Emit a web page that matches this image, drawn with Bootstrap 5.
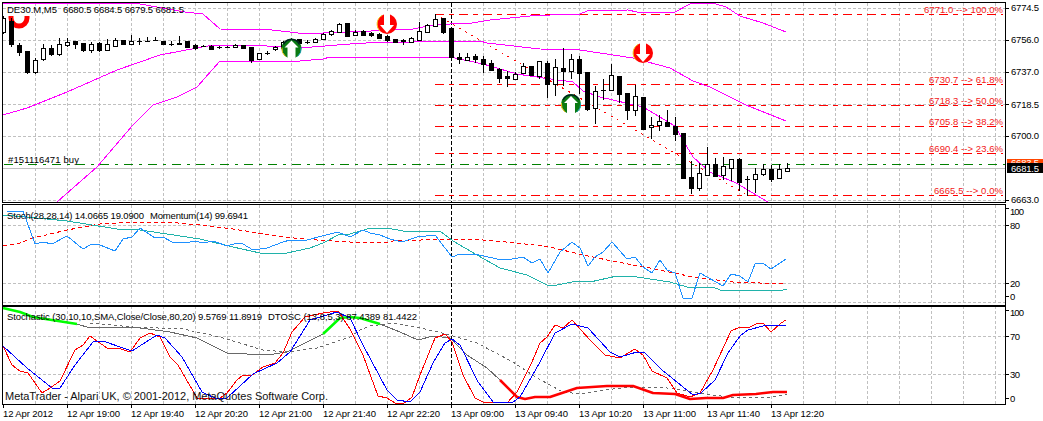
<!DOCTYPE html>
<html lang="en">
<head>
<meta charset="utf-8">
<title>DE30.M,M5</title>
<link href="https://cdn.jsdelivr.net/npm/bootstrap@5.3.0/dist/css/bootstrap.min.css" rel="stylesheet">
<style>
html,body{margin:0;padding:0;background:#fff;overflow:hidden}
.chart-wrap{width:1043px;height:421px}
.pane-svg{display:block;width:1043px;flex:none}
.pane-main{height:204px}.pane-mid{height:100px}.pane-low{height:117px}
.pane-svg text{font-family:"Liberation Sans",Arial,sans-serif;font-size:9.5px;fill:#000}
.pane-svg text.fib{fill:#f21a1a}
.pane-svg text.brand{font-size:11px;fill:#111}
.pane-svg text.px{fill:#fff}
.pane-svg text.px-o{fill:#fff}
.ln{fill:none;stroke-width:1;shape-rendering:crispEdges}
.gridl{stroke:#c0c0c0;stroke-dasharray:3 2}
.cross{stroke:#000;stroke-dasharray:4 2}
.frame{stroke:#000;fill:none;shape-rendering:crispEdges}
.fibl{stroke:#f00;stroke-dasharray:9 5 5 5}
.ordl{stroke:#008000;stroke-dasharray:9 6 3 6}
.bidl{stroke:#c0c0c0}
.diag{stroke:#f00;stroke-dasharray:2 5}
.band{stroke:#f0f}
.mom{stroke:#1e90ff}
.teal{stroke:#20b2aa}
.rdot{stroke:#f00;stroke-dasharray:4 3}
.st-r{stroke:#f00}
.st-b{stroke:#00f}
.gray{stroke:#696969}
.gray-d{stroke:#696969;stroke-dasharray:3 3}
.thick{fill:none;stroke-width:2.5;stroke-linejoin:round}
.th-g{stroke:#0f0}
.th-r{stroke:#f00}
.cdl{stroke:#000;shape-rendering:crispEdges}
.cdl-up{fill:#fff}.cdl-dn{fill:#000}
.ico-r{fill:#f00}.ico-g{fill:#0a7a12}
.ico-w{fill:#fff}
.ico-y{fill:none;stroke:#f5c518;stroke-width:1}
.ico-c{fill:none;stroke:#15a0b0;stroke-width:1}
.ico-k{fill:none;stroke:#022;stroke-width:1.5}
.u-red{fill:none;stroke:#f00;stroke-width:5}
.tag-o{fill:#ff4500}.tag-k{fill:#000}
</style>
</head>
<body>
<div class="chart-wrap d-flex flex-column">

<svg class="pane-svg pane-main" viewBox="0 0 1043 204" xmlns="http://www.w3.org/2000/svg">
  <defs><clipPath id="clipMain"><rect x="3" y="3" width="1002" height="199"/></clipPath></defs>
  <g id="gridA"></g>
  <g clip-path="url(#clipMain)">
    <path class="ln bidl" d="M3 168.5H1005"/>
    <path class="ln ordl" d="M4 164.5H1005"/>
    <path class="ln fibl" d="M435 14.5H1003M435 84.5H1003M435 105.5H1003M435 126.5H1003M435 153.5H1003M435 195.5H1003"/>
    <path class="ln st-r" d="M435.5 14V18"/>
    <path class="ln diag" d="M435 14L747 195"/>
    <polyline class="ln band" points="3,3 135,3 140,4 185,12 203,14 220,29 272,30 307,34 323,33 350,32 413,29 433,25 450,24 472,23 490,20 530,16 550,15 580,14 587,11 628,10 637,12 675,12 690,4 700,3 716,4 726,7 740,16 763,23 786,32"/>
    <polyline class="ln band" points="3,115 27,108 67,92 117,70 160,55 213,45 250,45 300,48 350,44 383,42 413,42 433,41 480,41 487,43 540,49 580,50 633,58 670,68 693,81 710,87 746,105 786,121"/>
    <polyline class="ln band" points="57,202 97,167 133,125 153,105 177,97 197,87 220,61 300,61 323,59 330,57 383,57 450,57 483,64 517,74 543,78 573,82 583,91 600,97 643,107 675,126 687,147 693,157 710,172 736,183 768,202"/>
    <path class="u-red" d="M11 16V18A8 8 0 0 0 27 18V16"/>
    <g id="candles"></g>
    <g id="icons"></g>
  </g>
  <g id="axisA"></g>
  <rect class="frame" x="2.5" y="2.5" width="1003" height="200"/>
  <text x="7" y="13" textLength="50">DE30.M,M5</text>
  <text x="63" y="13" textLength="121">6680.5 6684.5 6679.5 6681.5</text>
  <text x="8" y="163" textLength="71">#151116471 buy</text>
  <text class="fib" x="924" y="12.5" textLength="79">6771.0 --&gt; 100.0%</text>
  <text class="fib" x="929" y="82.5" textLength="74">6730.7 --&gt; 61.8%</text>
  <text class="fib" x="929" y="103.5" textLength="74">6718.3 --&gt; 50.0%</text>
  <text class="fib" x="929" y="124.5" textLength="74">6705.8 --&gt; 38.2%</text>
  <text class="fib" x="929" y="151.5" textLength="74">6690.4 --&gt; 23.6%</text>
  <text class="fib" x="934" y="193.5" textLength="69">6665.5 --&gt; 0.0%</text>
  <text x="1011" y="11" textLength="28">6774.5</text>
  <text x="1011" y="43" textLength="28">6756.0</text>
  <text x="1011" y="75" textLength="28">6737.0</text>
  <text x="1011" y="107.5" textLength="28">6718.5</text>
  <text x="1011" y="139" textLength="28">6700.0</text>
  <text x="1011" y="203" textLength="28">6663.0</text>
  <rect class="tag-o" x="1007" y="159" width="36" height="6"/>
  <text class="px-o" x="1011" y="166" textLength="28">6683.5</text>
  <rect class="tag-k" x="1007" y="163" width="36" height="10"/>
  <text class="px" x="1011" y="172" textLength="28">6681.5</text>
</svg>

<svg class="pane-svg pane-mid" viewBox="0 204 1043 100" xmlns="http://www.w3.org/2000/svg">
  <g id="gridB"></g>
  <polyline class="ln rdot" points="3,246 20,243 33,238 67,230 100,224 133,222 167,222 200,225 233,229 283,237 317,240 350,242 383,243 393,241 450,239 483,240 517,243 550,247 583,255 617,262 650,268 693,277 733,282 786,284"/>
  <polyline class="ln teal" points="3,215 27,217 67,221 117,229 140,230 167,234 200,239 233,247 260,253 287,253 310,248 323,243 340,234 350,234 367,229 387,228 403,231 422,231 440,231 453,241 477,255 500,268 527,275 547,285 557,285 577,281 590,282 617,276 637,277 650,279 670,282 687,287 713,287 720,290 743,290 748,291 783,290 787,289"/>
  <polyline class="ln mom" points="7,211 23,211 35,244 43,242 52,244 67,236 83,249 92,244 100,245 115,251 123,239 132,237 140,228 155,238 163,237 172,242 185,243 195,241 203,243 213,241 227,246 237,243 243,244 253,250 267,248 283,242 290,240 307,240 322,236 338,232 350,237 363,230 370,233 380,235 390,239 402,242 417,237 435,235 452,257 460,254 475,254 497,259 507,260 523,257 532,263 540,259 548,273 560,252 572,242 580,248 588,266 595,257 603,252 612,242 627,259 635,257 643,267 652,273 660,260 667,270 675,273 683,298 692,298 700,273 723,286 731,274 740,276 748,282 755,264 763,263 771,269 786,259"/>
  <path class="frame" d="M2.5 204.5H1005.5M2.5 204V304M1005.5 204V304"/>
  <text x="7" y="219" textLength="137">Stoch(28,28,14) 14.0665 19.0900</text>
  <text x="150" y="219" textLength="98">Momentum(14) 99.6941</text>
  <text x="1010" y="215" textLength="14">100</text>
  <text x="1010" y="229" textLength="10">80</text>
  <text x="1010" y="287" textLength="10">20</text>
  <text x="1010" y="300" textLength="5">0</text>
</svg>

<svg class="pane-svg pane-low" viewBox="0 304 1043 117" xmlns="http://www.w3.org/2000/svg">
  <g id="gridC"></g>
  <polyline class="ln gray-d" points="90,323 133,327 183,329 220,337 263,350 287,352 317,348 350,337 360,330 370,326 393,323 417,327 450,335 477,343 513,362 537,378 563,392 580,394 603,390 633,387 667,388 693,392 713,395 736,398 773,397 787,394"/>
  <polyline class="ln gray" points="77,324 90,328 113,327 133,327 170,332 197,338 227,353 267,355 287,352 323,334"/>
  <polyline class="ln gray" points="380,324 400,332 418,340 433,336 450,338 467,355 487,368 500,380"/>
  <polyline class="thick th-g" points="3,308 20,312 33,317 77,324"/>
  <polyline class="thick th-g" points="323,334 340,318 350,317 360,318 380,324"/>
  <polyline class="thick th-r" points="500,380 517,397 525,399 535,397 550,397 577,388 607,386 633,386 653,393 675,394 690,399 706,398 723,398 733,395 756,394 773,392 787,392"/>
  <polyline class="ln st-r" points="3,346 12,365 20,371 28,373 42,393 50,388 60,381 75,350 83,345 90,336 107,348 118,348 130,352 140,338 150,333 160,337 170,357 178,365 197,398 220,398 227,393 237,380 243,375 252,375 263,367 275,363 283,353 292,332 305,317 323,313 338,311 350,329 363,355 378,396 387,398 395,403 403,404 412,397 420,375 435,338 445,334 452,342 463,375 475,398 483,402 507,403 517,392 532,362 540,343 547,337 555,325 563,328 572,320 590,340 605,355 620,358 635,349 643,355 652,371 667,378 677,393 690,397 700,393 713,370 731,331 740,327 748,328 756,324 763,323 771,332 781,323 786,320"/>
  <polyline class="ln st-b" points="3,346 27,368 52,388 60,388 75,365 93,342 103,341 123,348 132,351 157,335 165,338 182,357 202,392 217,399 227,398 253,374 277,363 290,352 310,320 337,312 350,318 363,345 387,390 397,400 410,402 420,392 433,363 445,343 452,339 460,345 478,382 493,402 513,402 520,397 540,362 555,333 572,324 588,328 610,352 620,357 637,352 645,353 662,370 693,395 701,393 715,380 728,353 740,336 748,330 763,326 786,325"/>
  <path class="frame" d="M2.5 304V404.5H1005.5V304"/>
  <path class="frame" d="M2 305H1006M2 306H1006"/>
  <text x="7" y="320" textLength="255">Stochastic (30,10,10,SMA,Close/Close,80,20) 9.5769 11.8919</text>
  <text x="268" y="320" textLength="149">DTOSC (13,8,5,3) 87.4389 81.4422</text>
  <text class="brand" x="5" y="400" textLength="323">MetaTrader - Alpari UK, © 2001-2012, MetaQuotes Software Corp.</text>
  <text x="1010" y="316" textLength="14">100</text>
  <text x="1010" y="340" textLength="10">70</text>
  <text x="1010" y="378" textLength="10">30</text>
  <text x="1010" y="402" textLength="5">0</text>
  <text x="3" y="417" textLength="50">12 Apr 2012</text>
  <text x="67" y="417" textLength="53">12 Apr 19:00</text>
  <text x="131" y="417" textLength="53">12 Apr 19:40</text>
  <text x="195" y="417" textLength="53">12 Apr 20:20</text>
  <text x="259" y="417" textLength="53">12 Apr 21:00</text>
  <text x="323" y="417" textLength="53">12 Apr 21:40</text>
  <text x="387" y="417" textLength="53">12 Apr 22:20</text>
  <text x="451" y="417" textLength="53">13 Apr 09:00</text>
  <text x="515" y="417" textLength="53">13 Apr 09:40</text>
  <text x="579" y="417" textLength="53">13 Apr 10:20</text>
  <text x="643" y="417" textLength="53">13 Apr 11:00</text>
  <text x="707" y="417" textLength="53">13 Apr 11:40</text>
  <text x="771" y="417" textLength="53">13 Apr 12:20</text>
</svg>
</div>

<script>
(function(){
  var NS='http://www.w3.org/2000/svg';
  function el(parent,tag,attrs){var e=document.createElementNS(NS,tag);for(var k in attrs)e.setAttribute(k,attrs[k]);parent.appendChild(e);return e;}
  function grid(id,top,bot,ys){
    var g=document.getElementById(id),d='',c='';
    for(var x=35;x<=995;x+=32){ if(x===451) c+='M451.5 '+top+'V'+bot; else d+='M'+(x+.5)+' '+top+'V'+bot; }
    ys.forEach(function(y){d+='M3 '+(y+.5)+'H1005';});
    el(g,'path',{class:'ln gridl',d:d});
    el(g,'path',{class:'ln cross',d:c});
  }
  grid('gridA',3,202,[8,40,72,104,136,200]);
  grid('gridB',205,304,[225,283,302]);
  grid('gridC',306,404,[336,374]);
  var a=document.getElementById('axisA');
  var t='';[8,40,72,104,136,200].forEach(function(y){t+='M1005 '+(y+.5)+'H1009';});
  el(a,'path',{class:'frame',d:t});
  var b=document.getElementById('gridB'),tb='';[208,225,283,296].forEach(function(y){tb+='M1005 '+(y+.5)+'H1009';});
  el(b,'path',{class:'frame',d:tb});
  var c3=document.getElementById('gridC'),tc='';[310,336,374,398].forEach(function(y){tc+='M1005 '+(y+.5)+'H1009';});
  for(var x=3;x<=771;x+=64){tc+='M'+(x+.5)+' 404V408';}
  el(c3,'path',{class:'frame',d:tc});

  var D=[[16,18,32,34,1],[18,21,44,47,0],[43,45,52,56,0],[51,51,72,74,0],[58,60,72,74,1],[44,48,59,61,1],[45,48,54,56,0],[38,44,54,56,1],[38,42,45,47,1],[41,41,44,49,0],[43,43,50,52,0],[42,44,50,53,1],[42,43,50,52,0],[39,44,50,50,1],[38,40,46,47,1],[40,40,44,45,0],[35,41,44,45,1],[38,41,41,45,2],[37,41,41,41,2],[37,40,40,41,2],[41,41,44,45,0],[41,44,44,46,2],[36,43,44,45,0],[41,41,47,48,0],[44,45,48,50,0],[45,46,46,47,2],[45,46,49,50,0],[46,47,47,49,2],[46,47,47,48,2],[44,45,47,48,1],[45,45,48,48,0],[47,47,60,63,0],[53,53,59,59,1],[51,53,53,55,2],[46,47,49,51,1],[41,42,48,49,1],[38,41,46,47,1],[39,39,43,44,0],[40,42,42,44,2],[38,39,42,43,1],[33,34,39,40,1],[30,31,34,36,1],[23,24,32,32,1],[23,23,36,37,0],[30,32,35,36,1],[30,31,35,36,0],[32,33,35,37,0],[33,34,38,38,0],[35,36,40,42,0],[39,39,42,43,0],[39,40,41,45,0],[37,38,42,43,1],[22,31,40,40,1],[24,25,32,33,1],[14,19,26,26,1],[18,18,32,34,0],[28,28,57,58,0],[53,57,59,64,0],[53,57,60,61,1],[54,56,59,63,0],[56,59,64,73,0],[60,63,70,70,0],[68,69,78,83,0],[71,76,78,87,0],[72,74,79,79,1],[63,66,73,74,1],[66,66,75,75,0],[61,61,76,79,1],[61,63,84,98,0],[59,67,84,96,1],[48,68,71,86,0],[54,59,71,79,1],[56,59,73,94,0],[72,72,109,111,0],[86,91,108,124,1],[79,90,90,100,2],[64,75,90,91,1],[76,76,94,103,0],[93,93,110,120,0],[85,96,110,116,1],[97,97,129,130,0],[117,125,127,139,1],[115,121,125,131,1],[110,122,126,126,0],[117,126,134,141,0],[133,133,178,179,0],[161,177,188,194,0],[163,173,188,191,1],[147,164,175,175,1],[158,164,176,177,0],[157,166,175,180,1],[159,159,168,181,1],[158,159,182,191,0],[176,179,179,196,2],[168,174,179,193,1],[164,169,174,176,1],[165,169,179,182,0],[164,169,178,179,1],[163,168,171,172,1]];
  var g=document.getElementById('candles');
  D.forEach(function(v,i){
    var x=3+8*i+.5;
    el(g,'path',{class:'cdl',d:'M'+x+' '+v[0]+'V'+v[3]});
    if(v[4]===2){el(g,'path',{class:'cdl',d:'M'+(x-2.5)+' '+(v[1]+.5)+'H'+(x+2.5)});}
    else{el(g,'rect',{class:'cdl '+(v[4]?'cdl-up':'cdl-dn'),x:x-2,y:v[1]+.5,width:4,height:Math.max(1,v[2]-v[1])});}
  });

  var ic=document.getElementById('icons');
  function down(cx,cy){
    el(ic,'circle',{class:'ico-r',cx:cx,cy:cy,r:10});
    el(ic,'path',{class:'ico-y',d:'M'+(cx-7)+' '+(cy+7)+'A10 10 0 0 1 '+(cx-5)+' '+(cy-8.6)});
    el(ic,'path',{class:'ico-w',d:'M'+(cx-3)+' '+(cy-11)+'H'+(cx+3)+'V'+(cy+1)+'H'+(cx+7)+'L'+cx+' '+(cy+9)+'L'+(cx-7)+' '+(cy+1)+'H'+(cx-3)+'Z'});
  }
  function up(cx,cy){
    el(ic,'circle',{class:'ico-g',cx:cx,cy:cy,r:10});
    el(ic,'path',{class:'ico-k',d:'M'+(cx-8)+' '+(cy-4)+'A9 9 0 0 1 '+(cx+8)+' '+(cy-4)});
    el(ic,'path',{class:'ico-y',d:'M'+(cx-6)+' '+(cy+8)+'A10 10 0 0 1 '+(cx-9.6)+' '+(cy-1)});
    el(ic,'path',{class:'ico-c',d:'M'+(cx+6)+' '+(cy+8)+'A10 10 0 0 0 '+(cx+9.6)+' '+(cy-1)});
    el(ic,'path',{class:'ico-w',d:'M'+cx+' '+(cy-8)+'L'+(cx+7)+' '+(cy-1)+'H'+(cx+4)+'V'+(cy+11)+'H'+(cx-4)+'V'+(cy-1)+'H'+(cx-7)+'Z'});
  }
  down(387,24);down(643,53);up(291.5,48.5);up(571,104);
})();
</script>
<script src="https://cdn.jsdelivr.net/npm/bootstrap@5.3.0/dist/js/bootstrap.bundle.min.js"></script>
</body>
</html>
